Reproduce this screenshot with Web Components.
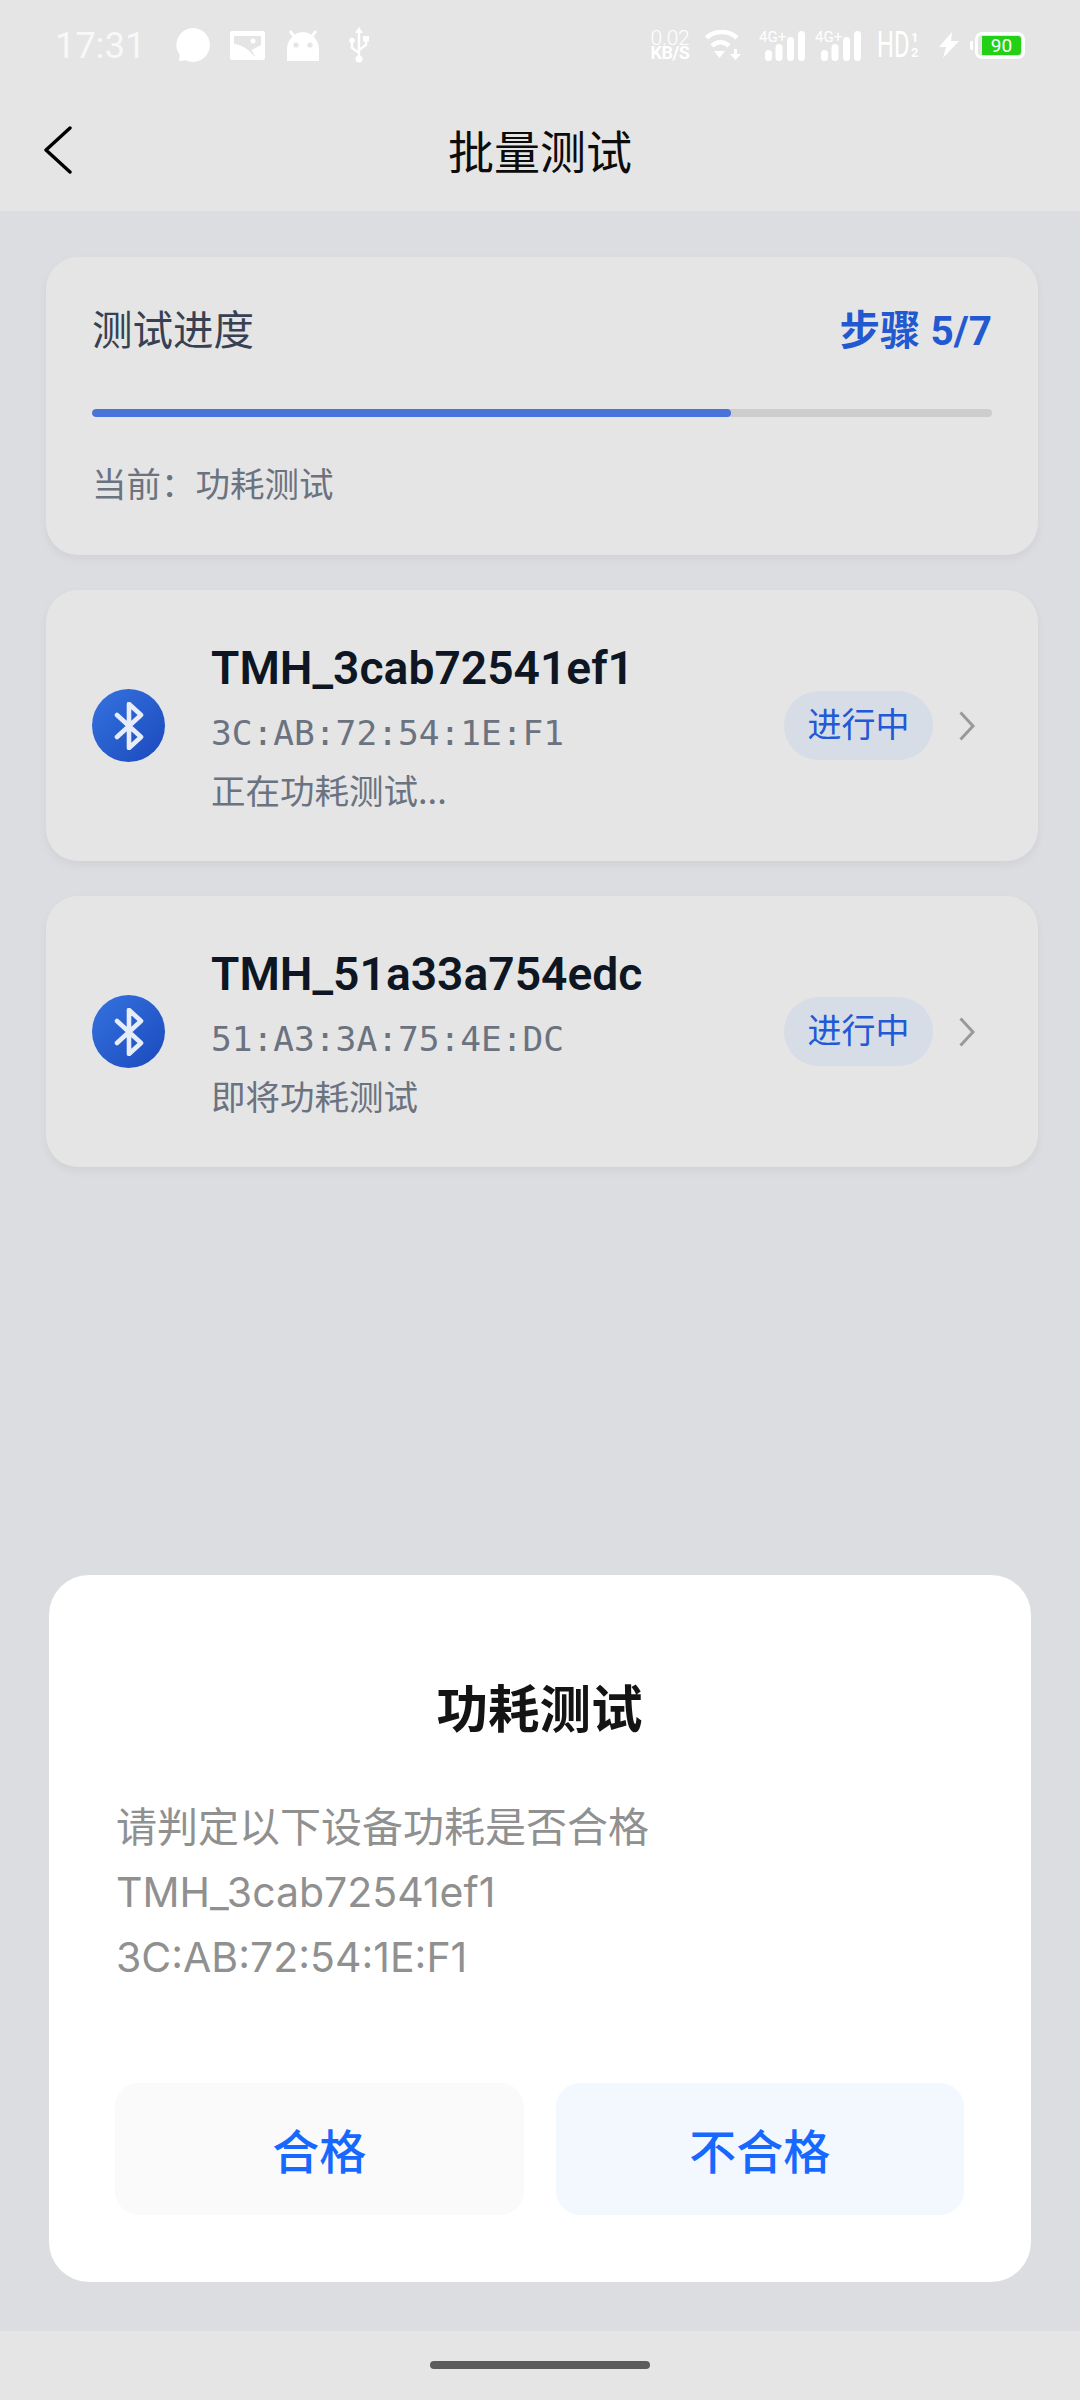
<!DOCTYPE html>
<html lang="zh-CN">
<head>
<meta charset="utf-8">
<title>批量测试</title>
<style>
  html, body { margin: 0; padding: 0; }
  body { width: 1080px; height: 2400px; overflow: hidden; background: #dcdde1; font-family: Roboto, "Noto Sans CJK SC", sans-serif; }
</style>
</head>
<body>
<app-screen>
  <status-bar slot="top"></status-bar>
  <nav-bar slot="top">批量测试</nav-bar>

  <progress-card current="5" total="7" percent="71" step="功耗测试"></progress-card>
  <device-card name="TMH_3cab72541ef1" mac="3C:AB:72:54:1E:F1" note="正在功耗测试..." state="进行中"></device-card>
  <device-card name="TMH_51a33a754edc" mac="51:A3:3A:75:4E:DC" note="即将功耗测试" state="进行中"></device-card>

  <confirm-dialog slot="dialog" heading="功耗测试">
    <span>请判定以下设备功耗是否合格</span>
    <span>TMH_3cab72541ef1</span>
    <span>3C:AB:72:54:1E:F1</span>
    <dialog-button slot="actions" tone="plain">合格</dialog-button>
    <dialog-button slot="actions" tone="soft">不合格</dialog-button>
  </confirm-dialog>

  <home-indicator slot="bottom"></home-indicator>
</app-screen>

<script>
'use strict';

const CJK = '"Noto Sans CJK SC", sans-serif';

class AppScreen extends HTMLElement {
  constructor() {
    super();
    this.attachShadow({ mode: 'open' });
    this.shadowRoot.innerHTML = `
      <style>
        :host { display: flex; flex-direction: column; width: 1080px; height: 2400px; background: #dcdde1; }
        .top { display: block; background: #e5e5e5; height: 211px; }
        .cards { display: flex; flex-direction: column; gap: 35px; padding: 46px 42px 0 46px; }
        .dialog { display: block; margin-top: auto; padding: 0 48px 49px 49px; }
      </style>
      <div class="top"><slot name="top"></slot></div>
      <div class="cards"><slot></slot></div>
      <div class="dialog"><slot name="dialog"></slot></div>
      <slot name="bottom"></slot>
    `;
  }
}

class StatusBar extends HTMLElement {
  constructor() {
    super();
    this.attachShadow({ mode: 'open' });
    const signal = `
      <svg class="sig" width="47" height="34" viewBox="0 0 47 34" fill="#fff">
        <text x="0" y="14" font-family="Roboto, sans-serif" font-size="15">4G+</text>
        <rect x="6" y="22" width="7" height="11" rx="3.5"/>
        <rect x="16.5" y="16" width="7" height="17" rx="3.5"/>
        <rect x="28" y="9" width="7" height="24" rx="3.5"/>
        <rect x="39" y="3" width="7" height="30" rx="3.5"/>
      </svg>`;
    this.shadowRoot.innerHTML = `
      <style>
        :host { display: flex; align-items: center; height: 90px; padding: 0 55px; box-sizing: border-box; color: #fff; font-family: Roboto, sans-serif; }
        .time { font-size: 36px; width: 80px; margin-right: 41px; color: #f8f8f8; letter-spacing: 0.2px; position: relative; top: 1px; }
        .left { display: flex; align-items: center; }
        .left svg { display: block; }
        .right { display: flex; align-items: center; margin-left: auto; height: 34px; }
        .speed { display: flex; flex-direction: column; width: 42px; margin-right: 11px; text-align: center; }
        .speed b { font-size: 21px; line-height: 16px; font-weight: 300; letter-spacing: -0.3px; }
        .speed i { font-size: 18px; line-height: 14px; font-weight: 700; font-style: normal; letter-spacing: -0.4px; }
        .hd { display: flex; align-items: center; margin-left: 15px; width: 44px; }
        .hd .big { flex: none; font-size: 36px; line-height: 30px; transform: scaleX(.66); transform-origin: left center; width: 34px; }
        .hd small { display: flex; flex-direction: column; font-size: 12.800px; line-height: 15px; font-weight: 700; text-align: center; }
        .sig + .sig { margin-left: 9px; }
        .batt { display: flex; align-items: center; justify-content: flex-end; width: 50px; height: 27px; box-sizing: border-box; border: 3px solid #fff; border-radius: 7px; padding: 1px; }
        .fill { display: block; width: 39px; height: 19px; background: #22d015; border-radius: 0 3px 3px 0; color: #fff; font-size: 19px; line-height: 19px; text-align: center; }
        .nub { width: 3px; height: 9px; margin-right: 2px; background: #fff; border-radius: 2px 0 0 2px; }
      </style>
      <div class="left">
        <span class="time">17:31</span>
        <svg width="34" height="36" viewBox="0 0 34 36" fill="#fff"><path d="M17 1a17 17 0 1 1-7.5 32.3L3 34l.7-6A17 17 0 0 1 17 1z"/></svg>
        <svg style="margin-left:20px" width="35" height="29" viewBox="0 0 35 29"><path fill="#fff" fill-rule="evenodd" d="M2 0h31a2 2 0 0 1 2 2v25a2 2 0 0 1-2 2H2a2 2 0 0 1-2-2V2a2 2 0 0 1 2-2zm2 5v8c9 1 15 6 20 12h1l-3.500-6 9.500-5V5zm19 2.500a2.500 2.500 0 1 0 0 5 2.500 2.500 0 0 0 0-5z"/></svg>
        <svg style="margin-left:22px" width="32" height="32" viewBox="0 0 32 32"><path fill="#fff" d="M2 3l2-2 3.500 4.500A16 16 0 0 1 16 3a16 16 0 0 1 8.500 2.500L28 1l2 2-3.500 4.500C30 11 32 15 32 20v12H0V20c0-5 2-9 5.500-12.500z"/><circle cx="9" cy="16" r="2.600" fill="#e5e5e5"/><circle cx="23" cy="16" r="2.600" fill="#e5e5e5"/></svg>
        <svg style="margin-left:29px" width="22" height="36" viewBox="0 0 22 36" fill="none" stroke="#fff" stroke-width="2.400"><path d="M11 5v26M11 26l-7-5v-5M11 23l7-5v-5"/><path fill="#fff" stroke="none" d="M11 0l4 6H7z"/><circle cx="4" cy="13.500" r="2.800" fill="#fff" stroke="none"/><rect x="15" y="9" width="6" height="5.500" fill="#fff" stroke="none"/><circle cx="11" cy="32" r="3.500" fill="#fff" stroke="none"/></svg>
      </div>
      <div class="right">
        <div class="speed"><b>0.02</b><i>KB/S</i></div>
        <svg style="margin-right:17px" width="40" height="30" viewBox="0 0 40 30" fill="none" stroke="#fff" stroke-width="4.500"><path d="M1.500 9C9 1 24 1 32 9" transform="translate(3 -1)"/><path d="M8 16c5-5 12-5 17 0" transform="translate(2 0)"/><path fill="#fff" stroke="none" d="M12 21h11l-5.500 7zM32 19h3v5h4l-5.500 6-5.500-6h4z"/></svg>
        ${signal}${signal}
        <div class="hd"><span class="big">HD</span><small><span>1</span><span>2</span></small></div>
        <svg style="margin-left:18px" width="20" height="26" viewBox="0 0 20 26"><path fill="#fff" d="M13 0L0 15h7L4 26l16-17h-8z"/></svg>
        <span class="nub" style="margin-left:11px"></span>
        <div class="batt"><span class="fill">90</span></div>
      </div>
    `;
  }
}

class NavBar extends HTMLElement {
  constructor() {
    super();
    this.attachShadow({ mode: 'open' });
    this.shadowRoot.innerHTML = `
      <style>
        :host { display: grid; grid-template-columns: 1fr auto 1fr; align-items: center; height: 121px; padding: 0 44px; box-sizing: border-box; }
        svg { display: block; }
        .title { font: 400 46px/1 ${CJK}; color: #0c0c0c; margin-top: -4px; }
      </style>
      <svg width="28" height="48" viewBox="0 0 28 48" fill="none" stroke="#000" stroke-width="3.400" stroke-linecap="round" stroke-linejoin="round" style="margin-top:-2px"><path d="M26 2L2 24l24 22"/></svg>
      <div class="title"><slot></slot></div>
      <div></div>
    `;
  }
}

class ProgressCard extends HTMLElement {
  constructor() {
    super();
    this.attachShadow({ mode: 'open' });
    const current = this.getAttribute('current');
    const total = this.getAttribute('total');
    const percent = this.getAttribute('percent');
    const step = this.getAttribute('step');
    this.shadowRoot.innerHTML = `
      <style>
        :host { display: block; }
        .card { height: 298px; box-sizing: border-box; padding: 48px 46px 0; background: #e5e5e5; border-radius: 32px; box-shadow: 0 4px 10px rgba(0, 0, 0, 0.05); }
        .head { display: flex; justify-content: space-between; align-items: center; height: 52px; }
        .label { font: 400 40.500px/52px ${CJK}; color: #374151; position: relative; top: -3px; }
        .step { font: 700 40.500px/52px Roboto, ${CJK}; color: #2258d0; }
        .track { height: 8px; margin-top: 52px; background: #cdcdcd; border-radius: 4px; overflow: hidden; }
        .bar { height: 100%; background: #4873d8; border-radius: 4px; }
        .now { margin-top: 43px; font: 400 34.500px/44px ${CJK}; color: #6b7280; }
      </style>
      <div class="card">
        <div class="head"><span class="label">测试进度</span><span class="step">步骤 ${current}/${total}</span></div>
        <div class="track"><div class="bar" style="width:${percent}%"></div></div>
        <div class="now">当前\uFF1A${step}</div>
      </div>
    `;
  }
}

class DeviceCard extends HTMLElement {
  constructor() {
    super();
    this.attachShadow({ mode: 'open' });
    this.shadowRoot.innerHTML = `
      <style>
        :host { display: block; }
        .card { display: flex; align-items: center; height: 271px; box-sizing: border-box; padding: 0 46px; background: #e5e5e5; border-radius: 32px; box-shadow: 0 4px 10px rgba(0, 0, 0, 0.05); }
        .logo { display: flex; align-items: center; justify-content: center; flex: none; width: 73px; height: 73px; border-radius: 50%; background: linear-gradient(135deg, #3573df, #1b49bd); margin-right: 46px; }
        svg { display: block; }
        .info { flex: 1; min-width: 0; }
        .name { font: 600 46.200px/60px Roboto, sans-serif; color: #0d1622; }
        .mac { font: 400 34.500px/50px "DejaVu Sans Mono", "Liberation Mono", monospace; color: #6b7280; margin-top: 10px; }
        .note { font: 400 34.500px/50px ${CJK}; color: #6b7280; margin-top: 6px; }
        .pill { flex: none; width: 149px; height: 69px; border-radius: 35px; background: #d7dde6; color: #2259d6; font: 400 34px/64px ${CJK}; text-align: center; }
        .arrow { flex: none; margin-left: 26px; margin-right: 17px; }
      </style>
      <div class="card">
        <div class="logo">
          <svg width="30" height="48" viewBox="0 0 30 48" fill="none" stroke="#e6ecf8" stroke-width="4.600" stroke-linejoin="round" stroke-linecap="round"><path d="M3 13l24 22-12 11V2l12 11L3 35"/></svg>
        </div>
        <div class="info">
          <div class="name">${this.getAttribute('name')}</div>
          <div class="mac">${this.getAttribute('mac')}</div>
          <div class="note">${this.getAttribute('note')}</div>
        </div>
        <div class="pill">${this.getAttribute('state')}</div>
        <svg class="arrow" width="16" height="30" viewBox="0 0 16 30" fill="none" stroke="#999" stroke-width="3"><path d="M1.500 1.500L14 15 1.500 28.500"/></svg>
      </div>
    `;
  }
}

class ConfirmDialog extends HTMLElement {
  constructor() {
    super();
    this.attachShadow({ mode: 'open' });
    this.shadowRoot.innerHTML = `
      <style>
        :host { display: block; height: 707px; box-sizing: border-box; padding: 0 67px 0 66px; background: #fff; border-radius: 40px; margin-right: 1px; }
        h2 { margin: 0; padding-top: 100px; height: 62px; box-sizing: content-box; text-align: center; font: 700 51.500px/62px ${CJK}; color: #141414; }
        .body { display: flex; flex-direction: column; margin-top: 58px; padding-left: 1px; font: 400 41px/65px Inter, ${CJK}; color: #909090; }
        ::slotted(span) { display: block; }
        .actions { display: flex; gap: 32px; margin-top: 93px; }
      </style>
      <h2>${this.getAttribute('heading')}</h2>
      <div class="body"><slot></slot></div>
      <div class="actions"><slot name="actions"></slot></div>
    `;
  }
}

class DialogButton extends HTMLElement {
  constructor() {
    super();
    this.attachShadow({ mode: 'open' });
    this.shadowRoot.innerHTML = `
      <style>
        :host { display: block; flex: 1; height: 132px; border-radius: 24px; background: #fafafa; color: #1668ff; text-align: center; font: 500 47px/132px ${CJK}; }
        :host([tone="soft"]) { background: #f3f8ff; }
      </style>
      <slot></slot>
    `;
  }
}

class HomeIndicator extends HTMLElement {
  constructor() {
    super();
    this.attachShadow({ mode: 'open' });
    this.shadowRoot.innerHTML = `
      <style>
        :host { display: flex; justify-content: center; align-items: center; height: 69px; background: #e5e5e5; }
        div { width: 220px; height: 8px; border-radius: 4px; background: #5c5c5c; margin-top: -1px; }
      </style>
      <div></div>
    `;
  }
}

customElements.define('app-screen', AppScreen);
customElements.define('status-bar', StatusBar);
customElements.define('nav-bar', NavBar);
customElements.define('progress-card', ProgressCard);
customElements.define('device-card', DeviceCard);
customElements.define('confirm-dialog', ConfirmDialog);
customElements.define('dialog-button', DialogButton);
customElements.define('home-indicator', HomeIndicator);
</script>
</body>
</html>
